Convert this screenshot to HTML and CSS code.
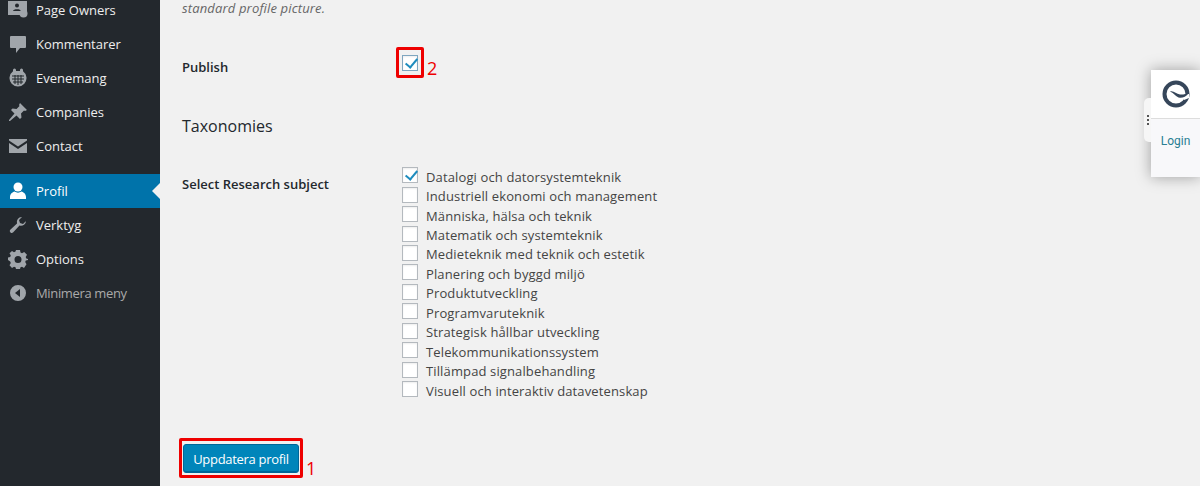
FILE: index.html
```html
<!DOCTYPE html>
<html lang="sv">
  <head>
    <meta charset="UTF-8" />
    <title>Profil</title>
    <link rel="stylesheet" href="styles.css">
  </head>
  <body>
    <div class="sidebar">
      <ul class="menu">
        <li class="menu-item">
          <svg class="icon" viewBox="0 0 20 20"><path d="M0 1h19v12h-5l-2 2H0z"/><circle cx="9" cy="5.500" r="2" fill="#23282d"/><path d="M5 11c0-2.500 8-2.500 8 0z" fill="#23282d"/><circle cx="15.500" cy="13.500" r="4"/></svg>
          Page Owners
        </li>
        <li class="menu-item">
          <svg class="icon" viewBox="0 0 20 20"><path d="M3 2h14a1 1 0 0 1 1 1v10a1 1 0 0 1-1 1h-5l-4 5v-5H3a1 1 0 0 1-1-1V3a1 1 0 0 1 1-1z"/></svg>
          Kommentarer
        </li>
        <li class="menu-item">
          <svg class="icon" viewBox="0 0 20 20"><path d="M5 2a1.500 1.500 0 0 1 3 0v1h4V2a1.500 1.500 0 0 1 3 0v1.200A8.500 8.500 0 1 1 5 3.200z"/><path d="M4 8h12M4 11h12M5 14h10M7 7v9M10 7v10M13 7v9" stroke="#23282d" stroke-width="1" fill="none"/></svg>
          Evenemang
        </li>
        <li class="menu-item">
          <svg class="icon" viewBox="0 0 20 20"><path d="M12 1l7 7-2 1-1-.500-3 3 .500 4-1.500 1.500-3.500-3.500L2 19l-1 0 0-1 5.500-6.500L3 8l1.500-1.500 4 .500 3-3L11 3z"/></svg>
          Companies
        </li>
        <li class="menu-item">
          <svg class="icon" viewBox="0 0 20 20"><path d="M1 3h18v1.500l-9 6-9-6z"/><path d="M1 7l9 6 9-6v10H1z"/></svg>
          Contact
        </li>
        <li class="menu-item current">
          <svg class="icon" viewBox="0 0 20 20"><circle cx="10" cy="6" r="4.500"/><path d="M2 18v-2c0-3 2.500-5 4.500-5.500 2 1.500 5 1.500 7 0 2 .500 4.500 2.500 4.500 5.500v2z"/></svg>
          Profil
        </li>
        <li class="menu-item">
          <svg class="icon" viewBox="0 0 20 20"><path d="M18 5.500a5 5 0 0 1-6.500 5L5 17.500a2 2 0 0 1-3-2.500l7-6.500A5 5 0 0 1 14 2l-3 3 1 3 3 1 3-3z"/></svg>
          Verktyg
        </li>
        <li class="menu-item">
          <svg class="icon" viewBox="0 0 20 20"><path fill-rule="evenodd" d="M8 1h4l.500 2.500 1.500.700L16.200 3 19 5.800l-1.300 2.200.600 1.500L20 10v1l-2.200.500-.600 1.500 1.300 2.200L16 19l-2-1.300-1.500.600L12 20H8l-.500-1.700L6 17.700 4 19l-2.500-2.800L2.800 14l-.600-1.500L0 11V8.500l2.200-.500.600-1.500L1.500 4.200 4 2l2 1.200 1.500-.700zM10 7a3.500 3.500 0 1 0 0 7 3.500 3.500 0 0 0 0-7z"/></svg>
          Options
        </li>
        <li class="menu-item collapse">
          <svg class="icon" viewBox="0 0 20 20"><path fill-rule="evenodd" d="M10 2a8 8 0 1 1 0 16 8 8 0 0 1 0-16zm2 4L7 10l5 4z"/></svg>
          Minimera meny
        </li>
      </ul>
    </div>

    <div class="content">
      <p class="note">standard profile picture.</p>

      <div class="row publish-row">
        <div class="row-label">Publish</div>
        <div class="marked marked-check">
          <span class="checkbox checked"></span>
        </div>
        <span class="mark-number">2</span>
      </div>

      <h2>Taxonomies</h2>

      <div class="row subject-row">
        <div class="row-label">Select Research subject</div>
        <ul class="subjects">
          <li><span class="checkbox checked"></span>Datalogi och datorsystemteknik</li>
          <li><span class="checkbox"></span>Industriell ekonomi och management</li>
          <li><span class="checkbox"></span>Människa, hälsa och teknik</li>
          <li><span class="checkbox"></span>Matematik och systemteknik</li>
          <li><span class="checkbox"></span>Medieteknik med teknik och estetik</li>
          <li><span class="checkbox"></span>Planering och byggd miljö</li>
          <li><span class="checkbox"></span>Produktutveckling</li>
          <li><span class="checkbox"></span>Programvaruteknik</li>
          <li><span class="checkbox"></span>Strategisk hållbar utveckling</li>
          <li><span class="checkbox"></span>Telekommunikationssystem</li>
          <li><span class="checkbox"></span>Tillämpad signalbehandling</li>
          <li><span class="checkbox"></span>Visuell och interaktiv datavetenskap</li>
        </ul>
      </div>

      <div class="submit-row">
        <div class="marked marked-button">
          <button class="save">Uppdatera profil</button>
        </div>
        <span class="mark-number">1</span>
      </div>
    </div>

    <div class="login-widget">
      <div class="widget-handle"><span></span><span></span><span></span></div>
      <div class="widget-logo">
        <svg viewBox="0 0 30 30" width="30" height="30"><circle cx="15" cy="15" r="11.500" fill="none" stroke="#36465a" stroke-width="4"/><path d="M28 15h-8l3 6 5-2z" fill="#fff"/><path d="M9 12.500c4-1 6 2.500 10 3 3 .300 6-.500 9-1.500-3 3.500-6 5-9 4.800-4-.300-6-5-10-6.300z" fill="#36465a"/></svg>
      </div>
      <div class="widget-login">Login</div>
    </div>
  </body>
</html>
```

FILE: styles.css
```css
* {
  box-sizing: border-box;
}

body {
  margin: 0;
  height: 486px;
  overflow: hidden;
  display: flex;
  background: #f1f1f1;
  color: #444;
  font-family: "Open Sans", "Noto Sans", sans-serif;
  font-size: 13px;
}

.sidebar {
  width: 160px;
  flex: none;
  background: #23282d;
}

.menu {
  list-style: none;
  margin: -7px 0 0;
  padding: 0;
}

.menu-item {
  position: relative;
  height: 34px;
  padding-left: 36px;
  display: flex;
  align-items: center;
  color: #eee;
  font-size: 13px;
}

.menu-item .icon {
  position: absolute;
  left: 8px;
  top: 7px;
  width: 20px;
  height: 20px;
  fill: #a0a5aa;
}

.menu-item.current {
  margin-top: 11px;
  background: #0073aa;
  color: #fff;
}

.menu-item.current .icon {
  fill: #fff;
}

.menu-item.current::after {
  content: "";
  position: absolute;
  right: 0;
  top: 9px;
  border: 8px solid transparent;
  border-right-color: #f1f1f1;
  border-left-width: 0;
}

.menu-item.collapse {
  color: #aaa;
  letter-spacing: -0.35px;
}

.content {
  flex: 1;
  padding: 0 0 0 22px;
}

.note {
  margin: 0;
  height: 16px;
  line-height: 16px;
  font-style: italic;
  color: #666;
  letter-spacing: 0.15px;
}

.row {
  display: flex;
}

.row-label {
  width: 220px;
  flex: none;
  font-weight: 600;
  color: #23282d;
}

.publish-row {
  margin-top: 31px;
  align-items: center;
  height: 31px;
}

.publish-row .row-label {
  padding-top: 8px;
}

.marked {
  border: 3px solid #ee0000;
  border-radius: 2px;
}

.marked-check {
  width: 28px;
  height: 31px;
  margin-left: -6px;
  display: flex;
  align-items: center;
  justify-content: center;
}

.mark-number {
  color: #ee0000;
  font-size: 18px;
  line-height: 20px;
  margin-left: 3px;
  align-self: flex-end;
}

h2 {
  margin: 37px 0 0;
  height: 52px;
  font-size: 16px;
  font-weight: 500;
  line-height: 22px;
  color: #23282d;
}

.subject-row .row-label {
  padding-top: 8px;
}

.subjects {
  list-style: none;
  margin: 0;
  padding: 0;
  letter-spacing: 0.13px;
}

.subjects li {
  height: 19.45px;
  display: flex;
  align-items: center;
  color: #444;
}

.checkbox {
  position: relative;
  width: 16px;
  height: 16px;
  flex: none;
  margin: -3px 8px 0 0;
  border: 1px solid #b4b9be;
  background: #fff;
  box-shadow: inset 0 1px 2px rgba(0, 0, 0, 0.07);
}

.checkbox.checked::after {
  content: "";
  position: absolute;
  left: 4.500px;
  top: 0;
  width: 5px;
  height: 10px;
  border: solid #1e8cbe;
  border-width: 0 2.500px 2.500px 0;
  transform: rotate(40deg);
}

.marked .checkbox {
  margin: 0;
  border-color: #7fa6c0;
}

.submit-row {
  display: flex;
  margin-top: 38px;
  margin-left: -3px;
}

.marked-button {
  width: 124px;
  height: 40px;
  padding: 3px 1px 2px;
  display: flex;
}

.save {
  width: 117px;
  margin: 0;
  border: 1px solid #006799;
  border-radius: 3px;
  background: #0085ba;
  box-shadow: inset 0 -1px 0 #006799;
  color: #fff;
  font-family: inherit;
  font-size: 13px;
  letter-spacing: -0.3px;
}

.login-widget {
  position: absolute;
  left: 1151px;
  top: 70px;
  width: 49px;
  height: 107px;
  background: #f8f8fa;
  box-shadow: 0 0 14px rgba(0, 0, 0, 0.35);
}

.widget-handle {
  position: absolute;
  left: -7px;
  top: 28px;
  width: 7px;
  height: 44px;
  padding-top: 17px;
  display: flex;
  flex-direction: column;
  align-items: center;
  gap: 2px;
  background: #f6f6f6;
  border-radius: 5px 0 0 5px;
}

.widget-handle span {
  width: 2px;
  height: 2px;
  background: #555;
}

.widget-logo {
  height: 49px;
  display: flex;
  align-items: center;
  justify-content: center;
  background: #fff;
  border-bottom: 1px solid #ddd;
}

.widget-login {
  padding-top: 15px;
  text-align: center;
  color: #2a7f93;
  font-family: Roboto, sans-serif;
  font-size: 12px;
}
```
